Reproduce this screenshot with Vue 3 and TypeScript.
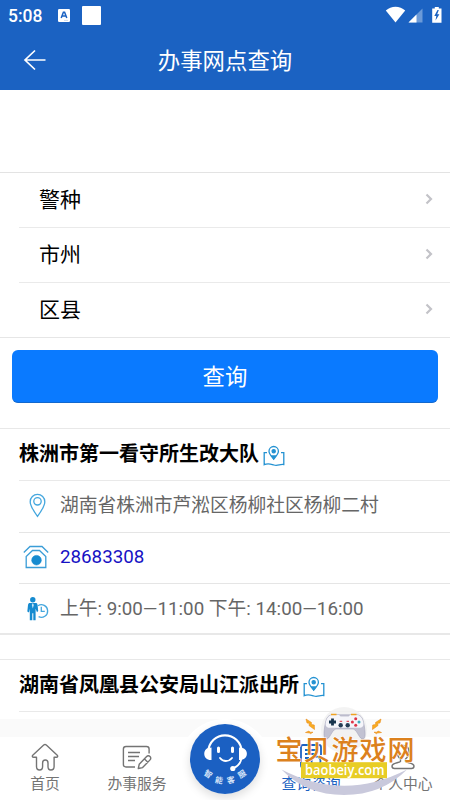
<script setup lang="ts">
interface Row { icon: 'pin' | 'phone' | 'time'; text: string }
interface Office { name: string; rows: Row[] }
const filters: string[] = ['警种', '市州', '区县']
const offices: Office[] = [
  {
    name: '株洲市第一看守所生改大队',
    rows: [
      { icon: 'pin', text: '湖南省株洲市芦淞区杨柳社区杨柳二村' },
      { icon: 'phone', text: '28683308' },
      { icon: 'time', text: '上午: 9:00—11:00 下午: 14:00—16:00' },
    ],
  },
  { name: '湖南省凤凰县公安局山江派出所', rows: [] },
]
</script>

<template>
  <div class="screen">
    <header class="header">
      <div class="status">
        <span class="clock">5:08</span>
        <svg class="a-icon" viewBox="0 0 12 13"><rect width="12" height="13" rx="1.2" fill="#fff" /><path d="M3.2 9 5.4 3.3h1.2L8.8 9M4.1 7.1h3.8" fill="none" stroke="#1b62c2" stroke-width="1.5" /><path d="M6 11.4h4" stroke="#b8cdea" stroke-width=".7" /></svg>
        <span class="square"></span>
        <svg class="signals" viewBox="0 0 58 18">
          <path d="M.8 4.5C6-.6 15-.6 20.2 4.5L10.5 16.5Z" fill="#fff" />
          <path d="M37.5 2.5v14H23.5Z" fill="#6b9ad8" /><path d="M31.5 8.5v8h-8Z" fill="#fff" />
          <path d="M49.8 1h4v1.5h2.7v14.2h-9.3V2.5h2.6Z" fill="#fff" />
          <path d="m52.5 4-3.200 6h2l-.8 4.500 3.900-6.300h-2.200l1.600-4.200Z" fill="#1b62c2" />
        </svg>
      </div>
      <div class="titlebar">
        <svg class="back" viewBox="0 0 24 22"><path d="M22.5 11H2M12 1.500 2 11l10 9.500" fill="none" stroke="#fff" stroke-width="1.700" /></svg>
        <h1>办事网点查询</h1>
      </div>
    </header>

    <main class="content">
      <section class="filters">
        <div v-for="name in filters" :key="name" class="filter">
          <span>{{ name }}</span>
          <svg class="chevron" viewBox="0 0 8 12"><path d="m1.500 1.500 4.500 4.500-4.500 4.500" fill="none" stroke="#c3c3c8" stroke-width="2.200" /></svg>
        </div>
      </section>
      <button class="search">查询</button>

      <section v-for="office in offices" :key="office.name" class="card">
        <div class="card-title">
          <h2>{{ office.name }}</h2>
          <svg class="map" viewBox="0 0 22 22" fill="none" stroke="#2492d2" stroke-width="1.300">
            <path d="M4 7.700H1.200v12c4-2 6-.8 9.800.3 3.800 1.200 6-1.200 9.800-.5V7.700H18" />
            <path d="M10.700 14.200C7.700 10.500 6 8.700 6 6.200a4.700 4.700 0 0 1 9.400 0c0 2.500-1.700 4.300-4.700 8Z" />
            <circle cx="10.700" cy="6.200" r="1.600" fill="#2492d2" /><path d="m9 11 1.700 2.700 1.700-2.700Z" fill="#2492d2" />
          </svg>
        </div>
        <div v-for="row in office.rows" :key="row.icon" class="detail" :class="row.icon">
          <svg v-if="row.icon === 'pin'" viewBox="0 0 26 26" class="icon" fill="none" stroke="#45a7de" stroke-width="1.300">
            <path d="M14.500 24.300C9.500 17.500 7.200 13.500 7.200 9.700a7.300 7.300 0 0 1 14.600 0c0 3.800-2.300 7.800-7.300 14.600Z" /><circle cx="14.500" cy="9.300" r="3.700" />
          </svg>
          <svg v-else-if="row.icon === 'phone'" viewBox="0 0 26 26" class="icon" fill="none" stroke="#3a9dd7" stroke-width="1.300">
            <path d="m.8 8.500 6.200-6h12l6.200 6M3.200 23.500V12.500l6.300-6h7l6.300 6v11Z" /><circle cx="13.500" cy="16.200" r="4.800" fill="#168bd0" stroke="#168bd0" stroke-width=".6" />
          </svg>
          <svg v-else viewBox="0 0 26 26" class="icon">
            <circle cx="9.800" cy="4.800" r="2.700" fill="#168bd0" /><path d="M6.200 8h7.200q1 .5 1.200 2l.6 6-1.200 1.300-1.400-3.500v11.500h-2.300v-7h-1v7H6.800V13.800L6 17.500 4.300 16.500 5 10q.2-1.500 1.200-2Z" fill="#168bd0" />
            <path d="m9.800 8 1 2-1 3.500-1-3.500Z" fill="#cbe7f7" /><path d="M15 10.700a6.300 6.300 0 1 1 .6 11M18.300 11.800v4.500h3.500" fill="none" stroke="#45a7de" stroke-width="1.300" />
          </svg>
          <a v-if="row.icon === 'phone'">{{ row.text }}</a>
          <span v-else>{{ row.text }}</span>
        </div>
      </section>
    </main>

    <nav class="tabs">
      <div class="tab">
        <svg class="tab-icon" viewBox="0 0 30 28"><path d="M6.500 14.200H3.700c-1.500 0-1.800-1.200-.7-2.200L13.700 2c.8-.7 1.800-.7 2.600 0L27 12c1.100 1 .8 2.200-.7 2.200h-2.200v9.300c0 2.300-1.100 3.500-3.200 3.500s-2.900-1.200-2.900-3.500V20c0-2-1-3-2.700-3s-2.700 1-2.700 3v3.500c0 2.300-1 3.500-3 3.500s-3.100-1.200-3.100-3.500Z" /></svg>
        <span>首页</span>
      </div>
      <div class="tab">
        <svg class="tab-icon" viewBox="0 0 30 28"><path d="M13 24H4c-1.800 0-2.600-.8-2.600-2.600V6.100c0-1.800.8-2.600 2.600-2.600h20.500c1.800 0 2.600.8 2.600 2.600v4.400M6 9.500h12M6 13.500h11M6 17.500h7M17.200 21.300l7.200-7.500c1.300-1.300 2.500-1.300 3.600-.2 1.100 1.100 1 2.200-.2 3.500l-7.200 7.500-4.300.9ZM22.500 16l3.600 3.500" /></svg>
        <span>办事服务</span>
      </div>
      <div class="assistant">
        <svg viewBox="0 0 70 70">
          <circle cx="35" cy="35" r="35" fill="#1b60c2" />
          <path d="M18 29C19 5.500 51 5.500 52 29" fill="none" stroke="#fff" stroke-width="2.200" />
          <path d="M21.500 23.500V36c-9 .5-9-11-3-12ZM49 23.500V36c10 .5 10-11 3-12Z" fill="#fff" />
          <path d="M51.500 34c-.7 6-4 8.500-8 10M30 34c3 4 8.700 4 12 0" fill="none" stroke="#fff" stroke-width="1.800" stroke-linecap="round" />
          <circle cx="42.800" cy="44.500" r="2.600" fill="#fff" /><path d="M28.500 24v3.500M42.500 24v3.500" stroke="#fff" stroke-width="3" stroke-linecap="round" />
          <g class="arc-text"><text transform="translate(16.500 52.500) rotate(34)">智</text><text transform="translate(28.500 59) rotate(12)">能</text><text transform="translate(41.500 59) rotate(-12)">客</text><text transform="translate(53.500 52.500) rotate(-34)">服</text></g>
        </svg>
      </div>
      <div class="tab active">
        <svg class="tab-icon" viewBox="0 0 30 28"><path d="M11 25H8c-2 0-3-1-3-3V4c0-1.500.7-2 2-2h16c1.300 0 2 .5 2 2v8M9 7h12M9 11h12M9 15h4" stroke-width="1.800" /><circle cx="20" cy="18" r="4.500" stroke-width="1.800" /><path d="m23.500 21.500 3.500 4" stroke-width="1.800" /></svg>
        <span>查询咨询</span>
      </div>
      <div class="tab">
        <svg class="tab-icon" viewBox="0 0 30 28"><path d="M15 2.500c8 0 7 10 2.500 13.500v2.500c2 1.500 8.500 1.500 8.500 4.500 0 2-1 2.500-2.500 2.500h-17C5 25.500 4 25 4 23c0-3 6.500-3 8.500-4.500V16C8 12.500 7 2.500 15 2.500Z" /></svg>
        <span>个人中心</span>
      </div>
    </nav>

    <svg class="brand" viewBox="265 700 185 100">
      <circle cx="344" cy="730" r="23" fill="#f0f0f0" opacity=".8" />
      <path d="M281.500 769.500Q344 802 407 769.500Q382 795 344 795T281.500 769.500Z" fill="#c9c9dc" />
      <path d="M332 714.800c-5 .5-6 5-7 10-1 6-2 13 .8 14.200 4 1 5.500-8.500 10-10h17.500c4.500 1.500 6 11 10 10 2.800-1.200 1.800-8.200.8-14.200-1-5-2-9.500-7-10Z" fill="#c2c2d2" stroke="#9b9bb4" stroke-width=".5" />
      <path d="M332 715c-4 .4-5.500 4-6.200 7.500-.7 4 1 5.200 4 5.200h29.500c3 0 4.700-1.200 4-5.200-.7-3.500-2.200-7.100-6.200-7.500h-7l-1.500 1.500h-8l-1.500-1.500Z" fill="#f5f5fa" />
      <path d="M329 722h7M332.500 718.500v7" stroke="#17344d" stroke-width="2.800" />
      <circle cx="340.700" cy="725.300" r="2.200" fill="#263c55" /><circle cx="347.700" cy="725.300" r="2.200" fill="#263c55" /><path d="M339.700 721.300h2.500M346.500 721.300h2.500" stroke="#db3340" />
      <circle cx="355.700" cy="718.700" r="1.500" fill="#dc3549" /><circle cx="352.400" cy="722" r="1.500" fill="#e13449" /><circle cx="359" cy="722" r="1.500" fill="#3cacbd" /><circle cx="355.700" cy="725.300" r="1.500" fill="#dc3549" />
      <path d="M331 714.500h5.500M351 714.500h5.500" stroke="#f0a221" stroke-width="1.600" />
      <path d="m306 719 5.500 3.500-.2 2 3 .5.200 4.500-5.500-4 .3-2.200-2.300-.3ZM381 719l-5.500 3.500.2 2-3 .5-.2 4.500 5.500-4-.3-2.200 2.300-.3ZM305.500 732.500l3.500-1.500 1 1.200 3 0-2.500 1.500-1-.7ZM381.500 732.500l-3.500-1.500-1 1.200-3 0 2.500 1.500 1-.7Z" fill="#f9ad20" stroke="#e98b1c" stroke-width=".6" />
      <text class="brand-name" x="275.500" y="759.500" textLength="139" lengthAdjust="spacing">宝贝游戏网</text>
      <rect x="301" y="762.200" width="86" height="16" fill="#e8cd25" />
      <text class="brand-url" x="305" y="774.800" textLength="79.500" lengthAdjust="spacingAndGlyphs">baobeiy.com</text>
    </svg>
  </div>
</template>

<style>
body { margin: 0; }
</style>

<style scoped>
* { box-sizing: border-box; }
.screen { position: relative; display: flex; flex-direction: column; width: 450px; height: 800px; overflow: hidden; background: #fff; font-family: Roboto, "Noto Sans CJK SC", sans-serif; }
h1, h2 { margin: 0; }
.header { flex: none; height: 90px; background: #1b62c2; color: #fff; }
.status { display: flex; align-items: center; height: 30px; padding: 0 7px 0 8px; }
.clock { width: 50px; font-size: 17.500px; font-weight: 500; line-height: 30px; padding-top: 2px; }
.a-icon { width: 12px; height: 13px; margin-right: 12px; }
.square { width: 19px; height: 19px; background: #fff; border-radius: 1px; }
.signals { width: 58px; height: 18px; margin-left: auto; }
.titlebar { position: relative; display: flex; align-items: center; justify-content: center; height: 60px; }
.titlebar h1 { font-size: 22.400px; line-height: 60px; font-weight: 400; padding-top: 1px; }
.back { position: absolute; left: 23px; top: 19px; width: 24px; height: 22px; }
.content { flex: 1; min-height: 0; padding-top: 82px; overflow: hidden; }
.filters { border-top: 1px solid #e3e3e3; border-bottom: 1px solid #e6e6e6; }
.filter { display: flex; align-items: center; justify-content: space-between; height: 55px; margin-left: 19px; padding: 0 17px 2px 20px; font-size: 21px; border-bottom: 1px solid #eaeaea; }
.filter span { margin-top: -3px; }
.filter:last-child { border: 0; height: 54px; }
.chevron { width: 8px; height: 12px; }
.search { display: block; width: 426px; height: 53px; margin: 12px 12px 25px; padding: 0 0 3px; border: 0; border-bottom: 1px solid #1268ce; border-radius: 6px; background: #0a7aff; color: #fff; font: 22.400px Roboto, "Noto Sans CJK SC", sans-serif; }
.card { border-top: 1px solid #e8e8e8; border-bottom: 2px solid #e8e8e8; margin-bottom: 24px; }
.card:last-child { border-bottom: 0; }
.card-title { display: flex; align-items: center; height: 52px; margin-left: 19px; padding-bottom: 1px; border-bottom: 1px solid #e9e9e9; }
.card-title h2 { font-size: 20px; line-height: 50px; font-weight: 700; color: #000; }
.map { width: 22px; height: 22px; margin: 4px 0 0 4px; }
.detail { display: flex; align-items: center; height: 51.500px; margin-left: 19px; padding: 0 0 2px 4px; border-bottom: 1px solid #e5e5e5; color: #666; font-size: 18.750px; white-space: pre; }
.detail:last-child { height: 49px; border: 0; }
.icon { width: 26px; height: 26px; margin-right: 11px; }
.detail span { margin-top: -3px; }
.detail a { color: #1712c4; }
.tabs { position: relative; flex: none; display: grid; grid-template-columns: 90px 94px 82px 90px 94px; justify-items: center; align-items: start; height: 81px; padding-top: 24px; background: linear-gradient(#fafafa 0 18px, #fff 18px); color: #747474; }
.tabs::before { content: ""; position: absolute; left: 178px; top: 0; width: 94px; height: 81px; border-radius: 47px 47px 0 0; background: #fff; }
.tab { display: flex; flex-direction: column; align-items: center; font-size: 14.800px; line-height: 20px; white-space: nowrap; }
.tab-icon { width: 30px; height: 28px; margin-bottom: 3px; fill: none; stroke: currentColor; stroke-width: 1.400; stroke-linejoin: round; }
.active { color: #1b62c2; }
.assistant { position: relative; width: 70px; height: 70px; margin-top: -19px; border-radius: 50%; box-shadow: 0 4px 10px #0002; }
.assistant svg { display: block; width: 70px; height: 70px; }
.arc-text { fill: #d5e4f8; font: 700 8px "Noto Sans CJK SC", sans-serif; text-anchor: middle; }
.brand { position: absolute; left: 265px; top: 700px; width: 185px; height: 100px; }
.brand-name { fill: #dc811d; font: 500 27px "Noto Sans CJK SC", sans-serif; paint-order: stroke; stroke: #fff; stroke-width: 1px; }
.brand-url { fill: #fff; font: 600 15px "Open Sans", sans-serif; }
</style>
